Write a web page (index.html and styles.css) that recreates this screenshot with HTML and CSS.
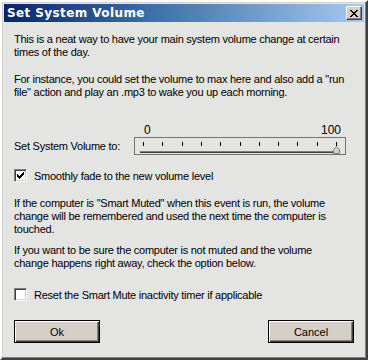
FILE: index.html
```html
<!DOCTYPE html>
<html>
<head>
<meta charset="utf-8">
<link rel="stylesheet" href="styles.css">
</head>
<body>
<div class="window">
  <div class="titlebar">
    <span class="title">Set System Volume</span>
    <button class="close" aria-label="Close">
      <svg width="8" height="7" viewBox="0 0 8 7"><path d="M0 0h2v1h1v1h2v-1h1v-1h2v1h-1v1h-1v1h-1v1h1v1h1v1h1v1h-2v-1h-1v-1h-2v1h-1v1h-2v-1h1v-1h1v-1h1v-1h-1v-1h-1v-1h-1z" fill="#000"/></svg>
    </button>
  </div>
  <div class="content">
    <p class="para intro">This is a neat way to have your main system volume change at certain times of the day.</p>
    <p class="para">For instance, you could set the volume to max here and also add a "run file" action and play an .mp3 to wake you up each morning.</p>
    <div class="slider-row">
      <span class="slider-label">Set System Volume to:</span>
      <div class="slider">
        <div class="scale"><span>0</span><span>100</span></div>
        <svg class="track" width="212" height="18" viewBox="0 0 212 18">
          <rect x="0.5" y="0.5" width="211" height="17" fill="none" stroke="#000" stroke-dasharray="1 1"/>
          <g fill="#000">
            <rect x="9" y="5" width="1" height="4"/>
            <rect x="28" y="5" width="1" height="4"/>
            <rect x="48" y="5" width="1" height="4"/>
            <rect x="67" y="5" width="1" height="4"/>
            <rect x="86" y="5" width="1" height="4"/>
            <rect x="106" y="5" width="1" height="4"/>
            <rect x="125" y="5" width="1" height="4"/>
            <rect x="144" y="5" width="1" height="4"/>
            <rect x="163" y="5" width="1" height="4"/>
            <rect x="183" y="5" width="1" height="4"/>
            <rect x="202" y="5" width="1" height="4"/>
          </g>
          <rect x="6" y="14" width="196" height="1" fill="#808080"/>
          <rect x="6" y="15" width="196" height="1" fill="#404040"/>
          <path d="M199.5 16.5v-4l3-3l3 3v4z" fill="#d4d0c8" stroke="#808080"/>
        </svg>
      </div>
    </div>
    <label class="check-row fade">
      <span class="box checked">
        <svg width="7" height="7" viewBox="0 0 7 7"><path d="M0 2h1v1h1v1h1v-1h1v-1h1v-1h1v-1h1v3h-1v1h-1v1h-1v1h-1v1h-1v-1h-1v-1h-1z" fill="#000"/></svg>
      </span>
      <span>Smoothly fade to the new volume level</span>
    </label>
    <p class="para muted">If the computer is "Smart Muted" when this event is run, the volume change will be remembered and used the next time the computer is touched.</p>
    <p class="para last">If you want to be sure the computer is not muted and the volume change happens right away, check the option below.</p>
    <label class="check-row reset">
      <span class="box"></span>
      <span>Reset the Smart Mute inactivity timer if applicable</span>
    </label>
    <div class="buttons">
      <button class="btn">Ok</button>
      <button class="btn">Cancel</button>
    </div>
  </div>
</div>
</body>
</html>
```
FILE: styles.css
```css
html, body {
  margin: 0;
  padding: 0;
}
body {
  width: 368px;
  height: 360px;
  overflow: hidden;
  font-family: "Liberation Sans", Arial, sans-serif;
  font-size: 11px;
  letter-spacing: -0.25px;
  color: #000;
}
.window {
  box-sizing: border-box;
  width: 368px;
  height: 360px;
  background: #e4e4e2;
  border-style: solid;
  border-width: 2px;
  border-color: #ffffff #404040 #404040 #ffffff;
  box-shadow: inset -1px -1px 0 #808080, inset 1px 1px 0 #d4d0c8;
  padding: 2px;
  display: flex;
  flex-direction: column;
}
.titlebar {
  height: 18px;
  flex: none;
  background: linear-gradient(to right, #0a246a 0%, #3a6ea5 40%, #a6caf0 100%);
  display: flex;
  align-items: center;
  justify-content: space-between;
  padding: 0 2px 0 3px;
}
.title {
  color: #fff;
  font-family: "DejaVu Sans", sans-serif;
  font-weight: bold;
  font-size: 12px;
  letter-spacing: 0.4px;
}
.close {
  width: 16px;
  height: 14px;
  padding: 0;
  margin: 0;
  background: #d4d0c8;
  border-style: solid;
  border-width: 1px;
  border-color: #ffffff #404040 #404040 #ffffff;
  box-shadow: inset -1px -1px 0 #808080;
  display: flex;
  align-items: center;
  justify-content: center;
}
.content {
  flex: 1;
  padding: 11px 10px 0 10px;
  display: flex;
  flex-direction: column;
}
.para {
  margin: 0 7px 14px 0;
  line-height: 13px;
}
.para.muted {
  margin-bottom: 8px;
}
.para.last {
  margin-bottom: 0;
}
.slider-row {
  display: flex;
  align-items: flex-end;
  margin-top: 10px;
  height: 32px;
}
.slider-label {
  width: 120px;
  padding-bottom: 3px;
}
.slider {
  display: flex;
  flex-direction: column;
}
.scale {
  display: flex;
  justify-content: space-between;
  padding: 0 5px 0 10px;
  line-height: 13px;
  font-size: 12px;
  letter-spacing: 0;
}
.track {
  display: block;
}
.check-row {
  display: flex;
  align-items: center;
  gap: 7px;
  height: 13px;
}
.check-row.fade {
  margin: 14px 0 15px 0;
}
.check-row.reset {
  margin: 18px 0 19px 0;
}
.box {
  box-sizing: border-box;
  width: 13px;
  height: 13px;
  background: #fff;
  border-style: solid;
  border-width: 1px;
  border-color: #808080 #ffffff #ffffff #808080;
  box-shadow: inset 1px 1px 0 #404040, inset -1px -1px 0 #d4d0c8;
  display: flex;
  align-items: center;
  justify-content: center;
}
.buttons {
  display: flex;
  justify-content: space-between;
}
.btn {
  box-sizing: border-box;
  width: 86px;
  height: 23px;
  padding: 0;
  font-family: "Liberation Sans", Arial, sans-serif;
  font-size: 11px;
  color: #000;
  background: #d4d0c8;
  border: 1px solid #000;
  box-shadow: inset 1px 1px 0 #ffffff, inset -1px -1px 0 #404040, inset -2px -2px 0 #808080;
}
```
